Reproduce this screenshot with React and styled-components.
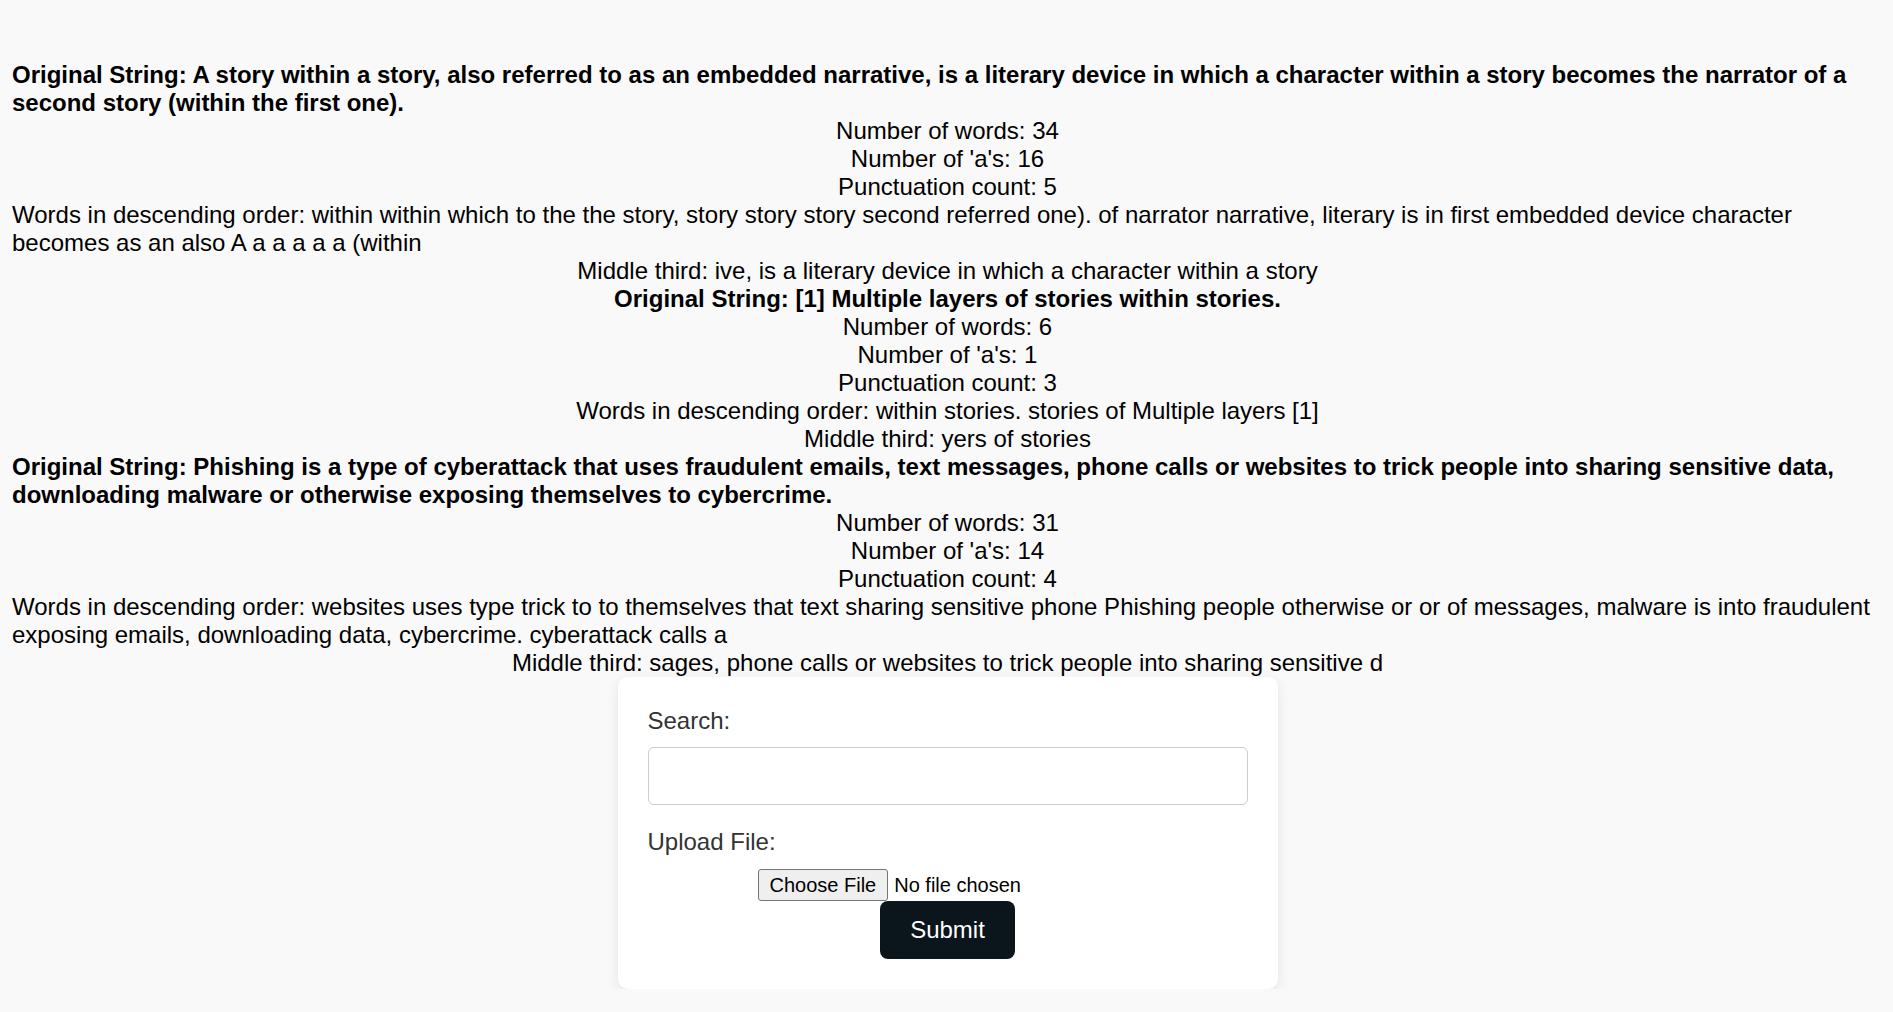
import React from "react"
import styled, { createGlobalStyle } from "styled-components"

const results = [
    {
        original: "A story within a story, also referred to as an embedded narrative, is a literary device in which a character within a story becomes the narrator of a second story (within the first one).",
        words: 34,
        aCount: 16,
        punctuation: 5,
        sorted: "within within which to the the story, story story story second referred one). of narrator narrative, literary is in first embedded device character becomes as an also A a a a a a (within",
        middle: "ive, is a literary device in which a character within a story",
    },
    {
        original: "[1] Multiple layers of stories within stories.",
        words: 6,
        aCount: 1,
        punctuation: 3,
        sorted: "within stories. stories of Multiple layers [1]",
        middle: "yers of stories",
    },
    {
        original: "Phishing is a type of cyberattack that uses fraudulent emails, text messages, phone calls or websites to trick people into sharing sensitive data, downloading malware or otherwise exposing themselves to cybercrime.",
        words: 31,
        aCount: 14,
        punctuation: 4,
        sorted: "websites uses type trick to to themselves that text sharing sensitive phone Phishing people otherwise or or of messages, malware is into fraudulent exposing emails, downloading data, cybercrime. cyberattack calls a",
        middle: "sages, phone calls or websites to trick people into sharing sensitive d",
    },
]

export default function App() {
    return (
        <>
            <GlobalStyle />
            <Page>
                <Results>
                    {results.map((item, i) => (
                        <React.Fragment key={i}>
                            <Original>Original String: {item.original}</Original>
                            <Line>Number of words: {item.words}</Line>
                            <Line>Number of 'a's: {item.aCount}</Line>
                            <Line>Punctuation count: {item.punctuation}</Line>
                            <Line>Words in descending order: {item.sorted}</Line>
                            <Line>Middle third: {item.middle}</Line>
                        </React.Fragment>
                    ))}
                </Results>
                <Card>
                    <Label htmlFor="search">Search:</Label>
                    <SearchInput id="search" type="text" />
                    <Label htmlFor="file" $upload>Upload File:</Label>
                    <FileInput id="file" type="file" />
                    <SubmitButton type="button">Submit</SubmitButton>
                </Card>
            </Page>
        </>
    )
}

const GlobalStyle = createGlobalStyle`
    * {
        box-sizing: border-box;
    }

    body {
        margin: 0;
        background: #f9f9f9;
        font-family: "Liberation Sans", Arial, sans-serif;
        color: #000;
    }
`

const Page = styled.div`
    padding: 61px 10px 0 12px;
`

const Results = styled.div`
    display: flex;
    flex-direction: column;
    align-items: center;
    font-size: 24px;
`

const Line = styled.div`
    max-width: 100%;
`

const Original = styled(Line)`
    font-weight: bold;
`

const Card = styled.form`
    display: flex;
    flex-direction: column;
    width: 660px;
    margin: 0 auto;
    padding: 30px;
    background: #fff;
    border-radius: 10px;
    box-shadow: 0 4px 14px rgba(0, 0, 0, 0.09);
`

const Label = styled.label`
    font-size: 24px;
    color: #333;
    margin-bottom: ${(p) => (p.$upload ? "13px" : "12px")};
`

const SearchInput = styled.input`
    height: 58px;
    margin-bottom: 23px;
    padding: 0 12px;
    font-size: 24px;
    font-family: inherit;
    border: 1px solid #ccc;
    border-radius: 6px;
    background: #fff;
`

const FileInput = styled.input`
    align-self: center;
    width: 380px;
    height: 32px;
    font-size: 20px;
    font-family: inherit;

    &::file-selector-button {
        height: 32px;
        margin-right: 6px;
        padding: 0 11px;
        font-size: 20px;
        font-family: inherit;
        color: #000;
        background: #efefef;
        border: 1px solid #767676;
        border-radius: 3px;
    }
`

const SubmitButton = styled.button`
    align-self: center;
    width: 135px;
    height: 58px;
    font-size: 24px;
    font-family: inherit;
    color: #fff;
    background: #0a151c;
    border: none;
    border-radius: 8px;
    cursor: pointer;
`
